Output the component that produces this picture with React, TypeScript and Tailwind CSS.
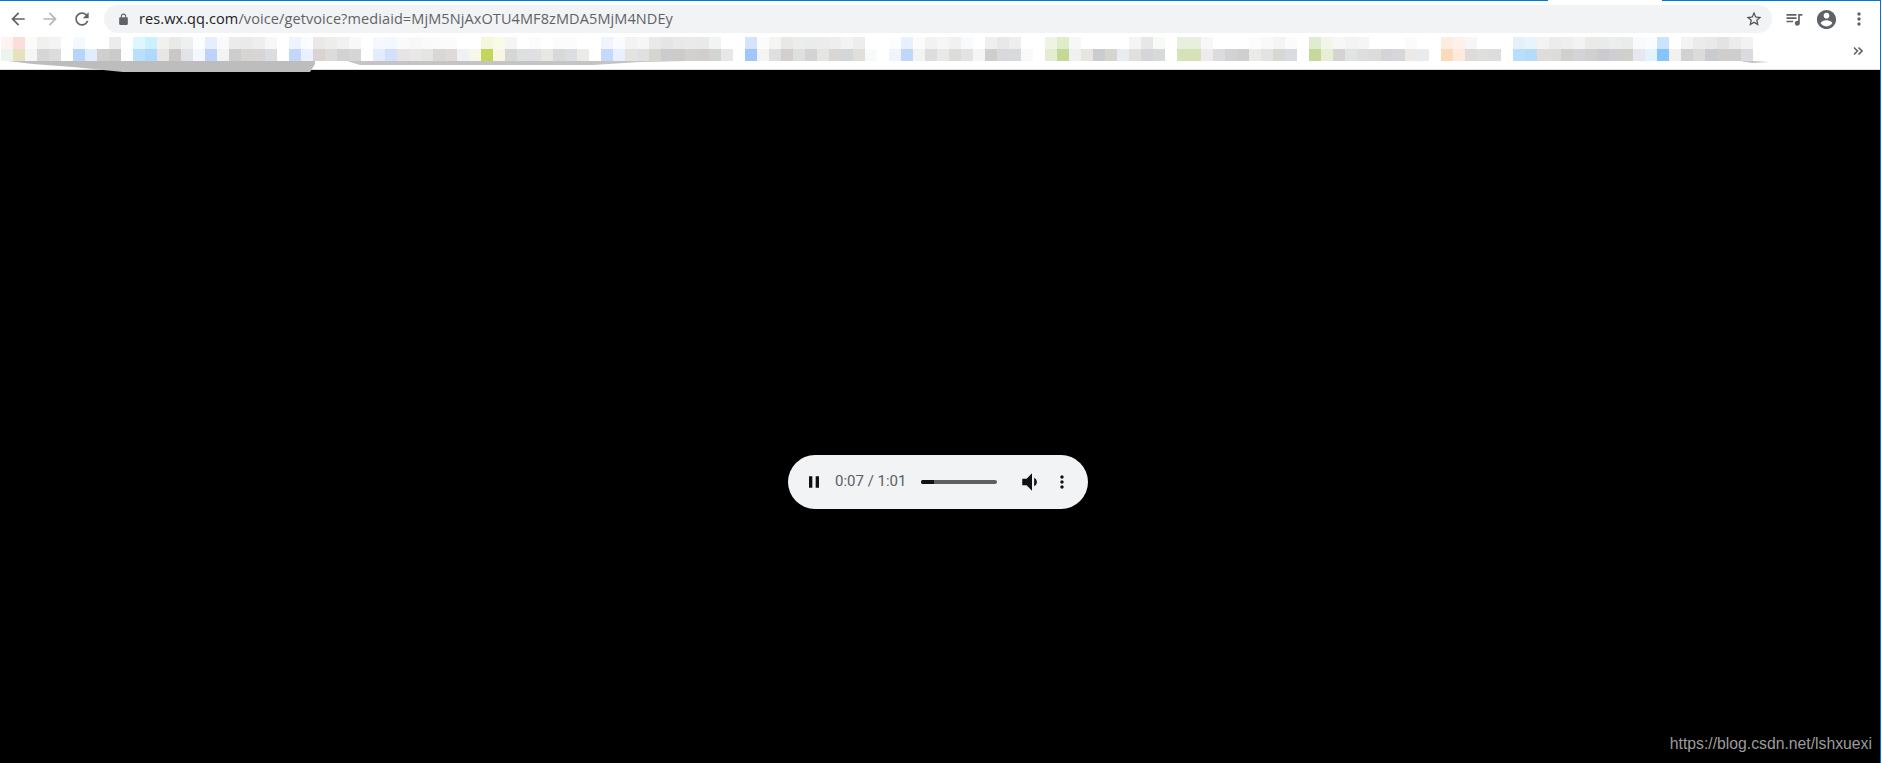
const blurCells = [
  "fdf3f1 edf4ee", "fddcdc e6e2bf", "fbfbf9 f5f5f3", "f0f1ef d6d6d6", "f3f3f3 dcdcde", "ffffff ffffff", "f4f8ff b9d4fb", "ffffff e2ecff",
  "ffffff cfcfcf", "ececec cbcbcb", "ffffff fcfdff", "def6ff b8e0fd", "c9f1ff aed8fd", "f2f1ee e7e6e3", "e9e9e7 c9c8c6", "eeeff0 e1e3e8",
  "fcfdfe f4f7ff", "e6edfc bdd2fb", "fafafa f3f3f1", "ebebeb cecdcd", "ebeaea d8d4d4", "eeeeee d8d5d7", "f7f7f7 dcdde0", "ffffff ffffff",
  "eef3fe c3d7fb", "fafcff e9f1ff", "ebe9e7 d9d4d1", "ededec dcdcdd", "f1f1f1 d2d2d4", "f8f8f8 d7d6d5", "ffffff ffffff", "f6f8ff e2ebff",
  "f3f7ff d3e0fd", "fafafa e7e4e4", "f8f8f8 e9e7e7", "fafafa e5e5e3", "fbfbfb d8d7d6", "fbfbfb dfd9d9", "ffffff f0f1f3", "ffffff f8f8ea",
  "f4f7dc c5d45c", "f9fbe7 f6f6e2", "f5f5f5 d6d6d6", "ffffff dedfe0", "fbfbfb dee0e3", "ffffff e8e7e4", "fcfcfc d8d8d8", "fcfcfc dcdde1",
  "ffffff ebebea", "ffffff ffffff", "eff4ff c5d9fd", "f9fbff e8f0ff", "f3f3f3 e5e2e2", "f6f6f6 dfe1e1", "e9e9e9 d5d5d2", "e5e5e5 cdcbcc",
  "e9e9e9 cccbca", "eaeaea d3d1d0", "e9e9e8 d1cecd", "f2f4f3 d3d5d3", "ffffff e7e7e8", "ffffff ffffff", "d3e4fc a0c6fd", "fcfcfc f5f3f3",
  "f5f5f4 dfdee0", "e8e8e6 d4cfcc", "ececea dee0de", "eaebec d4d3d4", "ececec e3e6e3", "eeeeee d9d6d4", "f3f3f2 d2d7da", "ededee e1dedb",
  "ffffff f8faf9", "ffffff ffffff", "fcfdff f0f4ff", "e8effe c2d6fc", "fbfbfb f3f3f3", "f2f2f2 dedcdc", "f6f6f6 e9e9e9", "f1f1ef dcdcdb",
  "f8fafb e3e3e4", "ffffff f6f5f3", "f0efed cfcecf", "e8e8eb d9d9dd", "eeeeee d9dadd", "ffffff f9f9f9", "ffffff ffffff", "eef4e4 e4edcf",
  "e0ebc9 c5d896", "f7f7f7 f0f0f0", "ffffff e6e5e1", "ffffff cbccd0", "ffffff d5d4d0", "ffffff e8ebef", "f5f5f5 e0e0e1", "e7e7e7 d7d5d9",
  "f8faf8 d8dad9", "ffffff ffffff", "e8f0dd d6e2b8", "e8f0dd d6e2b8", "f7f7f7 eeecea", "ffffff dddbdd", "ffffff d2d1d3", "ffffff cfcfcf",
  "fcfcfc ebebe8", "f9f9f9 e4e2e3", "f3f4f6 d7d8d4", "fafbfa d8dbe2", "ffffff ffffff", "e1ebd0 c6d89b", "f2f6e8 e6efd3", "f7f7f7 d6d4d2",
  "f3f3f3 e2e4e4", "f5f5f5 dedede", "ffffff dedcdb", "ffffff d5d5d9", "ffffff d6d7db", "fbfbfb ebeae8", "ffffff e9ebed", "ffffff ffffff",
  "fdece0 fdd9bb", "fdf1e9 fee9da", "f6f6f6 dddcda", "ffffff dfdfdc", "ffffff dddddd", "ffffff ffffff", "e3f1fd b8defd", "e7f3fd b6dbf8",
  "f3f3f3 dfdcd9", "ececec dcdcda", "eeeeec d1d0cd", "f3f3f3 d4d3da", "eaeae8 d1d0ce", "e9ebea cbcace", "eceeed cfced2", "eaecea d2d0cd",
  "f9fafc e7e8ee", "fbfcff e4f2fe", "c9e4fc 85c5fb", "ffffff f2f0f1", "f3f3f3 d1d1d1", "ebebeb dcdbdc", "e9e9e9 c9cbce", "e3e3e3 cfcecc",
  "ececec cfcecd", "f2f2f2 dadbde",
];

const Icon = ({ d, className }: { d: string; className: string }) => (
  <svg viewBox="0 0 24 24" fill="currentColor" className={className}>
    <path d={d} />
  </svg>
);

const icons = {
  back: "M20 11H7.83l5.59-5.59L12 4l-8 8 8 8 1.41-1.41L7.83 13H20v-2z",
  forward: "M12 4l-1.41 1.41L16.17 11H4v2h12.17l-5.58 5.59L12 20l8-8z",
  reload:
    "M17.65 6.35C16.2 4.9 14.21 4 12 4c-4.42 0-7.99 3.58-7.99 8s3.57 8 7.99 8c3.73 0 6.84-2.55 7.73-6h-2.08c-.82 2.33-3.04 4-5.65 4-3.31 0-6-2.69-6-6s2.69-6 6-6c1.66 0 3.14.69 4.22 1.78L13 11h7V4l-2.35 2.35z",
  lock: "M18 8h-1V6c0-2.76-2.24-5-5-5S7 3.24 7 6v2H6c-1.1 0-2 .9-2 2v10c0 1.1.9 2 2 2h12c1.1 0 2-.9 2-2V10c0-1.1-.9-2-2-2zM9 6c0-1.66 1.34-3 3-3s3 1.34 3 3v2H9V6z",
  star: "M22 9.24l-7.19-.62L12 2 9.19 8.63 2 9.24l5.46 4.73L5.82 21 12 17.27 18.18 21l-1.63-7.03L22 9.24zM12 15.4l-3.76 2.27 1-4.28-3.32-2.88 4.38-.38L12 6.1l1.71 4.04 4.38.38-3.32 2.88 1 4.28L12 15.4z",
  queue:
    "M15 6H3v2h12V6zm0 4H3v2h12v-2zM3 16h8v-2H3v2zM17 6v8.18c-.31-.11-.65-.18-1-.18-1.66 0-3 1.34-3 3s1.34 3 3 3 3-1.34 3-3V8h3V6h-5z",
  account:
    "M12 2C6.48 2 2 6.48 2 12s4.48 10 10 10 10-4.48 10-10S17.52 2 12 2zm0 3c1.66 0 3 1.34 3 3s-1.34 3-3 3-3-1.34-3-3 1.34-3 3-3zm0 14.2c-2.5 0-4.71-1.28-6-3.22.03-1.99 4-3.08 6-3.08 1.99 0 5.97 1.09 6 3.08-1.29 1.94-3.5 3.22-6 3.22z",
  more:
    "M12 8c1.1 0 2-.9 2-2s-.9-2-2-2-2 .9-2 2 .9 2 2 2zm0 2c-1.1 0-2 .9-2 2s.9 2 2 2 2-.9 2-2-.9-2-2-2zm0 6c-1.1 0-2 .9-2 2s.9 2 2 2 2-.9 2-2-.9-2-2-2z",
  pause: "M6 19h4V5H6v14zm8-14v14h4V5h-4z",
  volume: "M3 9v6h4l5 5V4L7 9H3zm13.5 3c0-1.77-1.02-3.29-2.5-4.03v8.05c1.48-.73 2.5-2.25 2.5-4.02z",
};

const Toolbar = () => (
  <div className="flex h-[36px] items-start text-[#5f6368]">
    <div className="flex h-[36px] w-[104px] items-center pl-[8px] gap-[12px]">
      <Icon d={icons.back} className="w-[20px] h-[20px]" />
      <Icon d={icons.forward} className="w-[20px] h-[20px] text-[#b4b6b9]" />
      <Icon d={icons.reload} className="w-[20px] h-[20px]" />
    </div>
    <div className="mt-[4px] flex h-[28px] w-[1668px] items-center rounded-full bg-[#f1f3f4] pl-[13px] pr-[9px]">
      <Icon d={icons.lock} className="w-[13px] h-[13px]" />
      <div className="ml-[9px] flex-1 font-['Open_Sans',sans-serif] text-[14.5px] leading-none tracking-[0.1px] whitespace-nowrap">
        <span className="text-[#202124]">res.wx.qq.com</span>/voice/getvoice?mediaid=MjM5NjAxOTU4MF8zMDA5MjM4NDEy
      </div>
      <Icon d={icons.star} className="w-[18px] h-[18px] text-[#4a4d51]" />
    </div>
    <div className="flex h-[36px] flex-1 items-center pl-[12px] gap-[11px]">
      <Icon d={icons.queue} className="w-[20px] h-[20px]" />
      <Icon d={icons.account} className="w-[23px] h-[23px]" />
      <Icon d={icons.more} className="w-[20px] h-[20px]" />
    </div>
  </div>
);

const BookmarkBar = () => (
  <div className="relative flex h-[33px] items-start justify-between border-b border-[#dadce0] bg-white pl-[1px] pr-[17px]">
    <div className="flex">
      {blurCells.map((cell, i) => {
        const [top, bottom] = cell.split(" ");
        return (
          <div key={i} className="w-[12px]">
            <div className="h-[12px]" style={{ backgroundColor: `#${top}` }} />
            <div className="h-[12px]" style={{ backgroundColor: `#${bottom}` }} />
          </div>
        );
      })}
    </div>
    <svg viewBox="0 0 10 10" fill="none" stroke="#5f6368" strokeWidth="1.6" className="mt-[9px] h-[10px] w-[10px]">
      <path d="M1 1.5 4.5 5 1 8.5M5.5 1.5 9 5 5.5 8.5" />
    </svg>
    <svg className="absolute left-0 top-0 h-[36px] w-[1880px]" viewBox="0 0 1880 36">
      <path d="M8 24 33 27 73 30 123 35 310 35 315 27 315 24Z" fill="#bdbdbd" />
      <path d="M347 24 360 28 593 28 640 25 687 24Z" fill="#c4c4c4" />
      <path d="M1740 24 1752 26 1770 25 1753 24Z" fill="#c4c4c4" />
    </svg>
  </div>
);

const AudioPlayer = () => (
  <div className="flex h-[54px] w-[300px] items-center rounded-full bg-[#f1f3f4] pl-[16px] text-[#111]">
    <Icon d={icons.pause} className="w-[20px] h-[20px]" />
    <span className="ml-[11px] w-[68px] font-['Roboto',sans-serif] text-[15px] whitespace-nowrap text-[#5b5e62]">0:07 / 1:01</span>
    <div className="ml-[18px] flex h-[4px] w-[76px] overflow-hidden rounded-full bg-[#5f5f5f]">
      <div className="h-full w-[13px] bg-[#111]" />
    </div>
    <Icon d={icons.volume} className="ml-[22px] w-[26px] h-[26px]" />
    <Icon d={icons.more} className="ml-[7px] w-[20px] h-[20px]" />
  </div>
);

export default function App() {
  return (
    <div className="flex h-[763px] overflow-hidden bg-white">
      <div className="relative flex w-[1881px] flex-col border-r border-[#0078d7]">
        <div className="flex h-[1px]">
          <div className="w-[1548px] bg-[#0078d7]" />
          <div className="w-[114px] bg-white" />
          <div className="flex-1 bg-[#0078d7]" />
        </div>
        <Toolbar />
        <BookmarkBar />
        <div className="flex flex-1 items-center justify-center bg-black pr-[4px] pt-[130px]">
          <AudioPlayer />
        </div>
        <div className="absolute bottom-[10px] right-[8px] font-['Liberation_Sans',sans-serif] text-[15.75px] leading-[18px] text-[#9b9b9b]">
          https://blog.csdn.net/lshxuexi
        </div>
      </div>
    </div>
  );
}
